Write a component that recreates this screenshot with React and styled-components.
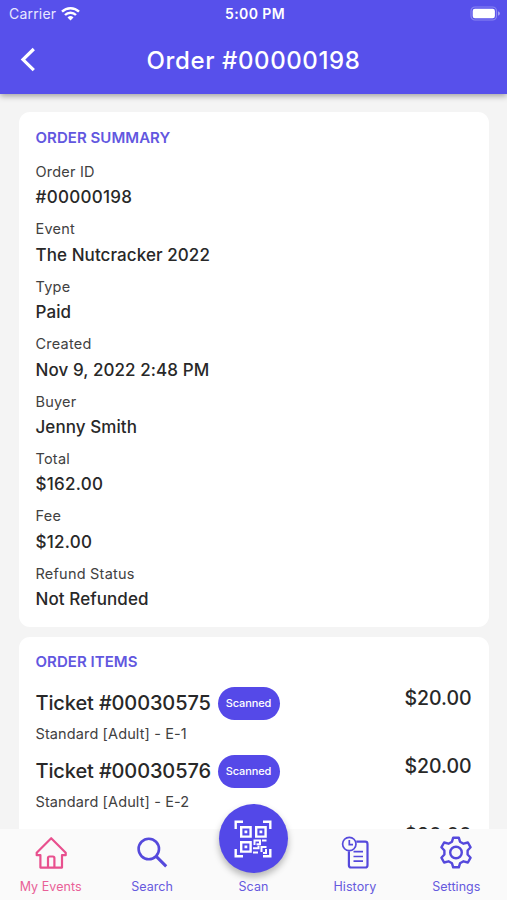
import React from 'react'
import styled, { createGlobalStyle } from 'styled-components'

const summary = [
    { label: 'Order ID', value: '#00000198', number: true },
    { label: 'Event', value: 'The Nutcracker 2022' },
    { label: 'Type', value: 'Paid' },
    { label: 'Created', value: 'Nov 9, 2022 2:48 PM' },
    { label: 'Buyer', value: 'Jenny Smith' },
    { label: 'Total', value: '$162.00', number: true },
    { label: 'Fee', value: '$12.00', number: true },
    { label: 'Refund Status', value: 'Not Refunded' }
]

const tickets = [
    { id: '00030575', seat: 'Standard [Adult] - E-1', price: '$20.00' },
    { id: '00030576', seat: 'Standard [Adult] - E-2', price: '$20.00' },
    { id: '00030577', seat: 'Standard [Adult] - E-3', price: '$20.00' }
]

const WifiIcon = () => (
    <svg width="19" height="14" viewBox="0 0 19 14" fill="none" stroke="#fff" strokeWidth="2.4">
        <path d="M1 4.7a12.2 12.2 0 0 1 17 0" />
        <path d="M4 8a7.8 7.8 0 0 1 11 0" />
        <path d="M9.5 13.6l-3-3.2a4.3 4.3 0 0 1 6 0z" fill="#fff" stroke="none" />
    </svg>
)

const BatteryIcon = () => (
    <svg width="31" height="15" viewBox="0 0 31 15">
        <rect x="1" y="1" width="25.5" height="13" rx="4" fill="none" stroke="#fff" strokeOpacity=".3" strokeWidth="1.2" />
        <rect x="2.7" y="2.7" width="22.2" height="9.6" rx="2.2" fill="#fff" />
        <path d="M28 5.2q2 .7 2 2.3t-2 2.3z" fill="#fff" fillOpacity=".45" />
    </svg>
)

const BackIcon = () => (
    <svg width="16" height="26" viewBox="0 0 16 26" fill="none" stroke="#fff" strokeWidth="3.2">
        <path d="M13.8 2L3 12.6l10.8 10.6" />
    </svg>
)

const HomeIcon = () => (
    <svg width="34" height="34" viewBox="0 0 34 34" fill="none" stroke="currentColor" strokeWidth="2.2" strokeLinejoin="round">
        <path d="M17.2 2.2L2.7 16.7v2.5h3.7v12.4H28V19.2h3.7v-2.5z" />
        <path d="M14 31.5V22q0-1.5 1.5-1.5h3.4q1.5 0 1.5 1.5v9.5" />
    </svg>
)

const SearchIcon = () => (
    <svg width="34" height="34" viewBox="0 0 34 34" fill="none" stroke="currentColor">
        <circle cx="13.8" cy="13" r="10.2" strokeWidth="2.6" />
        <path d="M21.2 20.4l10 10" strokeWidth="3" />
    </svg>
)

const QrIcon = () => (
    <svg width="38" height="38" viewBox="0 0 38 38" fill="none" stroke="#fff" strokeWidth="2.4">
        <path d="M1.7 9V1.7H9M29 1.7h7.3V9M36.3 29v7.3H29M9 36.3H1.7V29" />
        <path d="M7.2 7.2h9.4v9.4H7.2zM22.2 7.2h9.4v9.4h-9.4zM7.2 22.2h9.4v9.4H7.2z" />
        <path d="M10.5 10.5h2.8v2.8h-2.8zM25.5 10.5h2.8v2.8h-2.8zM10.5 25.5h2.8v2.8h-2.8z" fill="#fff" stroke="none" />
        <path d="M20.5 25v-4.5H26v3.7h-3.5M28 20.5h4.5M19 28.300h5.5v-2.5M27.500 32v-5h5M32 29v4h-3M19 32.5h5" strokeWidth="2" />
    </svg>
)

const HistoryIcon = () => (
    <svg width="34" height="34" viewBox="0 0 34 34" fill="none" stroke="currentColor" strokeWidth="1.7">
        <circle cx="11.3" cy="8" r="6.7" />
        <path d="M11.3 4v4.6H15" />
        <path d="M18.3 5.6h8.9q2.3 0 2.3 2.3v21.3q0 2.3-2.3 2.3H13.2q-2.300 0-2.300-2.300V15.200" strokeWidth="2.2" />
        <path d="M15.5 15.700H25M15.500 20.500H25M15.500 25.200H25" />
    </svg>
)

const GearIcon = () => (
    <svg width="34" height="34" viewBox="0 0 34 34" fill="none" stroke="currentColor" strokeWidth="2.4" strokeLinejoin="round">
        <path d="M14.2 1.7h5.6l1.2 4 3.500 2 4.400-1.200 2.700 4.800-3 3.200v4l3 3.200-2.700 4.800-4.400-1.200-3.500 2-1.200 4h-5.600l-1.200-4-3.500-2-4.400 1.200-2.700-4.800 3-3.200v-4l-3-3.200 2.700-4.800 4.400 1.200 3.500-2z" />
        <circle cx="17" cy="16.500" r="5.800" />
    </svg>
)

const tabs = [
    { name: 'My Events', Icon: HomeIcon, active: true },
    { name: 'Search', Icon: SearchIcon },
    { name: 'Scan' },
    { name: 'History', Icon: HistoryIcon },
    { name: 'Settings', Icon: GearIcon }
]

const App = () => (
    <Screen>
        <GlobalStyle />
        <Header>
            <StatusBar>
                <Carrier>Carrier <WifiIcon /></Carrier>
                <Clock>5:00 PM</Clock>
                <Battery><BatteryIcon /></Battery>
            </StatusBar>
            <NavBar>
                <BackButton aria-label="Back"><BackIcon /></BackButton>
                <Title>Order #00000198</Title>
            </NavBar>
        </Header>
        <Content>
            <Card>
                <CardTitle>ORDER SUMMARY</CardTitle>
                {
                    summary.map(item => (
                        <Field key={item.label}>
                            <Label>{item.label}</Label>
                            <Value $number={item.number}>{item.value}</Value>
                        </Field>
                    ))
                }
            </Card>
            <Card>
                <CardTitle>ORDER ITEMS</CardTitle>
                {
                    tickets.map(item => (
                        <Ticket key={item.id}>
                            <div>
                                <TicketName>
                                    <TicketNumber>Ticket #{item.id}</TicketNumber>
                                    <Badge>Scanned</Badge>
                                </TicketName>
                                <Seat>{item.seat}</Seat>
                            </div>
                            <Price>{item.price}</Price>
                        </Ticket>
                    ))
                }
            </Card>
        </Content>
        <TabBar>
            {
                tabs.map(({ name, Icon, active }) => (
                    <Tab key={name} $active={active}>
                        {Icon ? <Icon /> : <ScanButton><QrIcon /></ScanButton>}
                        <TabLabel>{name}</TabLabel>
                    </Tab>
                ))
            }
        </TabBar>
    </Screen>
)

const GlobalStyle = createGlobalStyle`
    *{
        box-sizing: border-box;
    }
    body{
        margin: 0;
        overflow: hidden;
        font-family: Inter, "Liberation Sans", sans-serif;
        color: #282828;
    }
    svg{
        display: block;
        flex-shrink: 0;
    }
`

const Screen = styled.div`
    height: 900px;
    display: flex;
    flex-direction: column;
    overflow: hidden;
    background: #f4f4f4;
`

const Header = styled.header`
    height: 94px;
    flex-shrink: 0;
    position: relative;
    z-index: 1;
    background: #5750eb;
    color: #fff;
    box-shadow: 0 2px 6px rgba(0, 0, 0, .35);
`

const StatusBar = styled.div`
    height: 27px;
    padding: 0 6px 0 9px;
    display: grid;
    grid-template-columns: 1fr auto 1fr;
    align-items: center;
    font-size: 14px;
    letter-spacing: .2px;
`

const Carrier = styled.div`
    display: flex;
    align-items: center;
    gap: 5px;
    color: #e8e7ff;
`

const Clock = styled.div`
    font-weight: 600;
    letter-spacing: .4px;
`

const Battery = styled.div`
    display: flex;
    justify-content: flex-end;
`

const NavBar = styled.div`
    height: 66px;
    display: grid;
    grid-template-columns: 56px 1fr 56px;
    align-items: center;
`

const BackButton = styled.button`
    border: 0;
    padding: 0 0 0 20px;
    background: none;
`

const Title = styled.h1`
    margin: 0;
    text-align: center;
    font-size: 24px;
    font-weight: 500;
    letter-spacing: .6px;
`

const Content = styled.main`
    flex: 1;
    min-height: 0;
    overflow: hidden;
    padding: 18px 18px 0 19px;
`

const Card = styled.section`
    padding: 15.5px 17.5px 14.2px 16.5px;
    border-radius: 11px;
    background: #fff;
    margin-bottom: 10px;
`

const CardTitle = styled.h2`
    margin: 0 0 11.4px;
    line-height: 20px;
    font-size: 15px;
    font-weight: 600;
    letter-spacing: .04px;
    color: #6257df;
`

const Field = styled.div`
    & + &{
        margin-top: 5.8px;
    }
`

const Label = styled.div`
    line-height: 25.4px;
    font-size: 14.5px;
    letter-spacing: .22px;
    color: #414141;
`

const Value = styled.div`
    line-height: 26.2px;
    font-size: 17px;
    font-weight: 500;
    letter-spacing: ${props => props.$number ? '.28px' : '.08px'};
`

const Ticket = styled.div`
    display: flex;
    justify-content: space-between;
    margin-top: 15.1px;
    & + &{
        margin-top: 9.2px;
    }
`

const TicketName = styled.div`
    height: 33px;
    display: flex;
    align-items: center;
    font-size: 20px;
    letter-spacing: -.12px;
`

const TicketNumber = styled.span`
    width: 175px;
    padding-bottom: 1px;
    white-space: nowrap;
    font-weight: 450;
`

const Badge = styled.span`
    width: 62px;
    height: 33px;
    line-height: 33px;
    margin-left: 7px;
    border-radius: 17px;
    background: #5549e8;
    color: #fff;
    text-align: center;
    font-size: 11px;
    font-weight: 500;
    letter-spacing: -.1px;
`

const Seat = styled.div`
    padding-top: 2px;
    line-height: 24px;
    font-size: 14.5px;
    letter-spacing: .12px;
    color: #414141;
`

const Price = styled.div`
    line-height: 23.6px;
    font-size: 19.5px;
    font-weight: 500;
    letter-spacing: -.05px;
`

const TabBar = styled.nav`
    height: 71.5px;
    flex-shrink: 0;
    position: relative;
    z-index: 1;
    display: grid;
    grid-template-columns: repeat(5, 1fr);
    grid-template-rows: 100%;
    background: #fafafa;
`

const Tab = styled.div`
    display: flex;
    flex-direction: column;
    align-items: center;
    justify-content: flex-end;
    padding-bottom: 4px;
    color: ${props => props.$active ? '#e8508e' : '#5549dc'};
`

const ScanButton = styled.div`
    width: 69px;
    height: 69px;
    flex-shrink: 0;
    margin-bottom: 5px;
    display: flex;
    align-items: center;
    justify-content: center;
    border-radius: 50%;
    background: #5348e8;
    box-shadow: 0 4px 7px rgba(0, 0, 0, .28);
`

const TabLabel = styled.span`
    margin-top: 8px;
    line-height: 18px;
    font-size: 12.5px;
    letter-spacing: .06px;
    opacity: .9;
    ${ScanButton} + &{
        margin-top: 0;
    }
`

export default App
